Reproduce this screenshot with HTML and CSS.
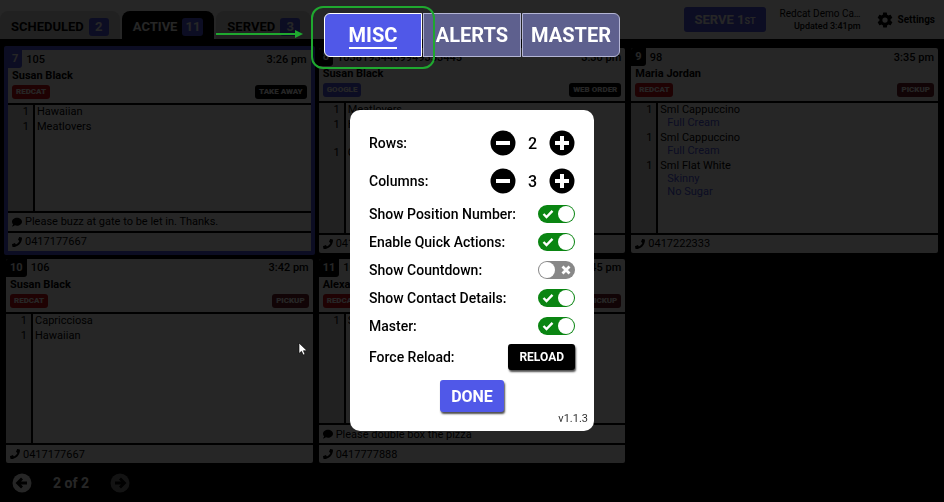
FILE: index.html
```html
<!DOCTYPE html>
<html lang="en">
<head>
    <meta charset="UTF-8">
    <meta name="viewport" content="width=device-width, initial-scale=1.0">
    <title>Orders</title>
    <link rel="stylesheet" href="styles.css">
</head>
<body>
    <svg class="sprite" aria-hidden="true">
        <symbol id="phone" viewBox="0 0 512 512"><path d="M493 24.600l-104-24c-11.300-2.600-22.900 3.300-27.500 13.900l-48 112c-4.200 9.800-1.400 21.300 6.900 28l60.600 49.600c-36 76.700-98.900 140.500-177.200 177.200l-49.600-60.600c-6.800-8.300-18.200-11.100-28-6.900l-112 48C3.900 366.500-2 378.100.6 389.400l24 104C27.100 504.200 36.700 512 48 512c256.100 0 464-207.500 464-464 0-11.200-7.700-20.900-19-23.400z"/></symbol>
        <symbol id="comment" viewBox="0 0 512 512"><path d="M256 32C114.600 32 0 125.100 0 240c0 49.600 21.400 95 57 130.700C44.500 421.100 2.700 466 2.200 466.500c-2.200 2.300-2.800 5.700-1.500 8.700S4.800 480 8 480c66.300 0 116-31.800 140.600-51.400 32.700 12.300 69 19.400 107.400 19.400 141.400 0 256-93.100 256-208S397.400 32 256 32z"/></symbol>
        <symbol id="check" viewBox="0 0 12 10"><path d="M1.500 5l3 3L10.500 1.800" fill="none" stroke="#fff" stroke-width="2.400"/></symbol>
        <symbol id="cross" viewBox="0 0 10 10"><path d="M1.500 1.500l7 7M8.500 1.500l-7 7" fill="none" stroke="#fff" stroke-width="2.800"/></symbol>
    </svg>

    <div class="page">
        <header class="header">
            <nav class="tabs">
                <a class="tab" href="#scheduled">SCHEDULED <span class="count">2</span></a>
                <a class="tab active" href="#active">ACTIVE <span class="count">11</span></a>
                <a class="tab" href="#served">SERVED <span class="count">3</span></a>
            </nav>
            <div class="header-right">
                <button class="serve">SERVE 1<small>ST</small></button>
                <div class="store">
                    <div class="store-name">Redcat Demo Ca…</div>
                    <div class="updated">Updated 3:41pm</div>
                </div>
                <button class="settings">
                    <svg width="18" height="18" viewBox="0 0 24 24"><path d="M19.400 13c.04-.3.060-.65.060-1s-.02-.7-.07-1l2.100-1.650c.2-.15.250-.42.120-.64l-2-3.460c-.12-.22-.37-.3-.6-.22l-2.500 1c-.5-.4-1.070-.73-1.700-.98l-.37-2.650A.5.5 0 0 0 14 2h-4c-.25 0-.45.180-.5.420l-.36 2.650c-.63.250-1.200.6-1.700.98l-2.500-1c-.22-.08-.47 0-.6.220l-2 3.460c-.12.220-.07.490.120.640L4.600 11c-.05.300-.08.660-.08 1s.03.700.080 1l-2.120 1.650c-.2.150-.24.420-.12.640l2 3.460c.12.220.370.300.600.220l2.500-1c.5.400 1.070.730 1.700.980l.36 2.650c.05.240.250.420.500.420h4c.25 0 .46-.18.500-.42l.37-2.650c.63-.25 1.200-.58 1.700-.98l2.500 1c.22.080.470 0 .600-.22l2-3.460c.12-.22.070-.49-.12-.64zM12 15.500a3.500 3.500 0 1 1 0-7 3.500 3.500 0 0 1 0 7z"/></svg>
                    Settings
                </button>
            </div>
        </header>

        <main class="board">
            <article class="card selected">
                <div class="card-top">
                    <div class="line"><span class="pos">7</span><span class="number">105</span><span class="time">3:26 pm</span></div>
                    <div class="name">Susan Black</div>
                    <div class="tags"><span class="tag red">REDCAT</span><span class="tag">TAKE AWAY</span></div>
                </div>
                <ul class="items">
                    <li><span class="qty">1</span><span>Hawaiian</span></li>
                    <li><span class="qty">1</span><span>Meatlovers</span></li>
                </ul>
                <div class="info"><svg class="icon"><use href="#comment"/></svg>Please buzz at gate to be let in. Thanks.</div>
                <div class="info"><svg class="icon"><use href="#phone"/></svg>0417177667</div>
            </article>

            <article class="card">
                <div class="card-top">
                    <div class="line"><span class="pos">8</span><span class="number">10381934469949353445</span><span class="time">3:30 pm</span></div>
                    <div class="name">Susan Black</div>
                    <div class="tags"><span class="tag blue">GOOGLE</span><span class="tag">WEB ORDER</span></div>
                </div>
                <ul class="items">
                    <li><span class="qty">1</span><span>Meatlovers</span></li>
                    <li><span class="qty">1</span><span>Hawaiian<span class="mod">Large</span></span></li>
                    <li><span class="qty">1</span><span>Capricciosa</span></li>
                </ul>
                <div class="info"><svg class="icon"><use href="#phone"/></svg>0417177667</div>
            </article>

            <article class="card">
                <div class="card-top">
                    <div class="line"><span class="pos">9</span><span class="number">98</span><span class="time">3:35 pm</span></div>
                    <div class="name">Maria Jordan</div>
                    <div class="tags"><span class="tag red">REDCAT</span><span class="tag maroon">PICKUP</span></div>
                </div>
                <ul class="items">
                    <li><span class="qty">1</span><span>Sml Cappuccino<span class="mod">Full Cream</span></span></li>
                    <li><span class="qty">1</span><span>Sml Cappuccino<span class="mod">Full Cream</span></span></li>
                    <li><span class="qty">1</span><span>Sml Flat White<span class="mod">Skinny</span><span class="mod">No Sugar</span></span></li>
                </ul>
                <div class="info"><svg class="icon"><use href="#phone"/></svg>0417222333</div>
            </article>

            <article class="card">
                <div class="card-top">
                    <div class="line"><span class="pos">10</span><span class="number">106</span><span class="time">3:42 pm</span></div>
                    <div class="name">Susan Black</div>
                    <div class="tags"><span class="tag red">REDCAT</span><span class="tag maroon">PICKUP</span></div>
                </div>
                <ul class="items">
                    <li><span class="qty">1</span><span>Capricciosa</span></li>
                    <li><span class="qty">1</span><span>Hawaiian</span></li>
                </ul>
                <div class="info"><svg class="icon"><use href="#phone"/></svg>0417177667</div>
            </article>

            <article class="card">
                <div class="card-top">
                    <div class="line"><span class="pos">11</span><span class="number">107</span><span class="time">3:45 pm</span></div>
                    <div class="name">Alexa</div>
                    <div class="tags"><span class="tag red">REDCAT</span><span class="tag maroon">PICKUP</span></div>
                </div>
                <ul class="items">
                    <li><span class="qty">1</span><span>Supreme</span></li>
                </ul>
                <div class="info"><svg class="icon"><use href="#comment"/></svg>Please double box the pizza</div>
                <div class="info"><svg class="icon"><use href="#phone"/></svg>0417777888</div>
            </article>
        </main>

        <footer class="pager">
            <button class="page-btn" aria-label="Previous page">
                <svg width="20" height="20" viewBox="0 0 20 20"><circle cx="10" cy="10" r="9.500" fill="#fff"/><path d="M15 10H6M10 5.500L5.500 10l4.500 4.500" fill="none" stroke="#000" stroke-width="2.800"/></svg>
            </button>
            <span>2 of 2</span>
            <button class="page-btn" aria-label="Next page" disabled>
                <svg width="20" height="20" viewBox="0 0 20 20"><circle cx="10" cy="10" r="9.500" fill="#fff"/><path d="M5 10h9M10 5.500l4.500 4.500-4.500 4.500" fill="none" stroke="#000" stroke-width="2.800"/></svg>
            </button>
        </footer>
    </div>

    <div class="overlay">
        <nav class="modal-tabs">
            <button class="modal-tab current"><span>MISC</span></button>
            <button class="modal-tab"><span>ALERTS</span></button>
            <button class="modal-tab"><span>MASTER</span></button>
        </nav>

        <section class="modal" role="dialog" aria-label="Settings">
            <div class="row tall">
                <span>Rows:</span>
                <div class="stepper">
                    <button aria-label="Fewer rows"><svg width="26" height="26" viewBox="0 0 26 26"><circle cx="13" cy="13" r="12.500"/><path d="M6 13h14" stroke="#fff" stroke-width="4"/></svg></button>
                    <output>2</output>
                    <button aria-label="More rows"><svg width="26" height="26" viewBox="0 0 26 26"><circle cx="13" cy="13" r="12.500"/><path d="M6 13h14M13 6v14" stroke="#fff" stroke-width="4"/></svg></button>
                </div>
            </div>
            <div class="row tall">
                <span>Columns:</span>
                <div class="stepper">
                    <button aria-label="Fewer columns"><svg width="26" height="26" viewBox="0 0 26 26"><circle cx="13" cy="13" r="12.500"/><path d="M6 13h14" stroke="#fff" stroke-width="4"/></svg></button>
                    <output>3</output>
                    <button aria-label="More columns"><svg width="26" height="26" viewBox="0 0 26 26"><circle cx="13" cy="13" r="12.500"/><path d="M6 13h14M13 6v14" stroke="#fff" stroke-width="4"/></svg></button>
                </div>
            </div>
            <div class="row">
                <label for="position">Show Position Number:</label>
                <span class="switch"><input type="checkbox" id="position" checked><svg class="on"><use href="#check"/></svg><svg class="off"><use href="#cross"/></svg></span>
            </div>
            <div class="row">
                <label for="quick">Enable Quick Actions:</label>
                <span class="switch"><input type="checkbox" id="quick" checked><svg class="on"><use href="#check"/></svg><svg class="off"><use href="#cross"/></svg></span>
            </div>
            <div class="row">
                <label for="countdown">Show Countdown:</label>
                <span class="switch"><input type="checkbox" id="countdown"><svg class="on"><use href="#check"/></svg><svg class="off"><use href="#cross"/></svg></span>
            </div>
            <div class="row">
                <label for="contact">Show Contact Details:</label>
                <span class="switch"><input type="checkbox" id="contact" checked><svg class="on"><use href="#check"/></svg><svg class="off"><use href="#cross"/></svg></span>
            </div>
            <div class="row">
                <label for="master">Master:</label>
                <span class="switch"><input type="checkbox" id="master" checked><svg class="on"><use href="#check"/></svg><svg class="off"><use href="#cross"/></svg></span>
            </div>
            <div class="row reload-row">
                <span>Force Reload:</span>
                <button class="reload">RELOAD</button>
            </div>
            <button class="done">DONE</button>
            <div class="version">v1.1.3</div>
        </section>
    </div>

    <div class="highlight"></div>
    <svg class="arrow" width="88" height="10" viewBox="0 0 88 10"><path d="M0 5h82" stroke="#1fa82f" stroke-width="2"/><path d="M79 1l8 4-8 4z" fill="#1fa82f"/></svg>
    <svg class="cursor" width="10" height="14" viewBox="0 0 10 14"><path d="M1 1v10.500l2.500-2.200L5.200 13l1.800-.8-1.600-3.500H9z" fill="#fff" stroke="#000" stroke-width=".6"/></svg>
</body>
</html>
```

FILE: styles.css
```css
* {
    box-sizing: border-box;
}
body {
    margin: 0;
    font-family: Roboto, sans-serif;
    background-color: #000;
    color: #000;
}
button {
    font-family: inherit;
    border: none;
    padding: 0;
    background: none;
    cursor: pointer;
}
svg {
    display: block;
}
.sprite {
    display: none;
}
.page {
    display: flex;
    flex-direction: column;
    height: 100vh;
}

/* header */
.header {
    display: flex;
    justify-content: space-between;
    height: 39px;
    background-color: #fff;
}
.tabs {
    display: flex;
    align-items: flex-end;
    gap: 2px;
}
.tab {
    display: flex;
    align-items: center;
    gap: 5px;
    height: 28px;
    padding: 3px 11px 0;
    border-radius: 8px 8px 0 0;
    background-color: #ddd;
    color: #000;
    font-size: 13px;
    font-weight: 700;
    text-decoration: none;
}
.tab.active {
    background-color: #000;
    color: #fff;
}
.count {
    min-width: 20px;
    padding: 0 3px;
    border-radius: 3px;
    background-color: #5058e8;
    color: #fff;
    line-height: 18px;
    text-align: center;
}
.header-right {
    display: flex;
    align-items: center;
    padding-right: 9px;
}
.serve {
    height: 25px;
    padding: 0 10px;
    margin-right: 14px;
    border-radius: 3px;
    background-color: #5058e8;
    color: #fff;
    font-size: 13px;
    font-weight: 700;
}
.serve small {
    font-size: 9px;
}
.store {
    margin-right: 15px;
    text-align: right;
    line-height: 13px;
}
.store-name {
    font-size: 10px;
}
.updated {
    font-size: 9px;
    font-weight: 500;
}
.settings {
    display: flex;
    align-items: center;
    gap: 4px;
    font-size: 10px;
    font-weight: 700;
}

/* order cards */
.board {
    flex: 1;
    display: grid;
    grid-template-columns: repeat(3, 1fr);
    grid-template-rows: 1fr 1fr;
    gap: 6px;
    padding: 9px 6px 0;
}
.card {
    display: flex;
    flex-direction: column;
    border-radius: 2px;
    background-color: #fff;
    overflow: hidden;
}
.card.selected {
    margin: -2px;
    border: 4px solid #5058e8;
}
.line {
    display: flex;
    align-items: center;
    height: 18px;
    padding-right: 4px;
    font-size: 11px;
    font-weight: 500;
}
.pos {
    padding: 0 4px;
    border-radius: 0 0 3px 0;
    background-color: #000;
    color: #fff;
    line-height: 18px;
    font-weight: 700;
}
.selected .pos {
    background-color: #5058e8;
}
.number {
    flex: 1;
    padding-left: 4px;
}
.name {
    padding-left: 4px;
    font-size: 11px;
    font-weight: 700;
    line-height: 16px;
}
.tags {
    display: flex;
    justify-content: space-between;
    padding: 1px 4px 4px;
}
.tag {
    padding: 0 4px;
    border-radius: 3px;
    background-color: #000;
    color: #fff;
    font-size: 8px;
    font-weight: 900;
    line-height: 14px;
}
.tag.red {
    background-color: #d01018;
}
.tag.blue {
    background-color: #5058e8;
}
.tag.maroon {
    background-color: #702028;
}
.items {
    flex: 1;
    margin: 0;
    padding: 0;
    list-style: none;
    border-top: 2px solid #000;
    background: linear-gradient(to right, #ddd 25px, #000 25px, #000 27px, #fff 27px);
    font-size: 11px;
    line-height: 13px;
}
.items li {
    display: grid;
    grid-template-columns: 21px 1fr;
    gap: 8px;
    margin-bottom: 2px;
}
.qty {
    text-align: right;
}
.mod {
    display: block;
    padding-left: 7px;
    color: #5058e8;
}
.info {
    display: flex;
    align-items: center;
    gap: 3px;
    height: 20px;
    padding: 0 4px;
    border-top: 2px solid #000;
    font-size: 11px;
}
.icon {
    width: 10px;
    height: 10px;
}
.pager {
    display: flex;
    align-items: center;
    gap: 21px;
    height: 39px;
    padding-left: 12px;
    color: #fff;
    font-size: 14px;
    font-weight: 700;
}
.page-btn:disabled {
    opacity: 0.5;
}

/* settings overlay */
.overlay {
    position: fixed;
    inset: 0;
    display: flex;
    flex-direction: column;
    align-items: center;
    gap: 53px;
    padding-top: 13px;
    background-color: rgba(0, 0, 0, 0.85);
}
.modal-tabs {
    display: flex;
    gap: 1px;
}
.modal-tab {
    width: 98px;
    height: 44px;
    border: 1px solid #b4b5d4;
    background-color: #5e608e;
    color: #fff;
    font-size: 20px;
    font-weight: 700;
}
.modal-tab:first-child {
    border-radius: 6px 0 0 6px;
}
.modal-tab:last-child {
    border-radius: 0 6px 6px 0;
}
.modal-tab.current {
    border-color: #fff;
    background-color: #5058e8;
}
.modal-tab.current span {
    border-bottom: 2px solid #fff;
}
.modal {
    display: flex;
    flex-direction: column;
    width: 244px;
    padding: 14px 19px 6px;
    border-radius: 10px;
    background-color: #fff;
}
.row {
    display: flex;
    justify-content: space-between;
    align-items: center;
    height: 28px;
    font-size: 14px;
    font-weight: 500;
}
.row.tall {
    height: 38px;
}
.row.reload-row {
    height: 34px;
}
.stepper {
    display: flex;
    align-items: center;
    gap: 12px;
}
.stepper output {
    font-size: 16px;
}
.switch {
    display: grid;
    grid-template-columns: 19px 18px;
    align-items: center;
}
.switch input {
    grid-area: 1 / 1 / 2 / 3;
    display: flex;
    appearance: none;
    width: 37px;
    height: 18px;
    margin: 0;
    padding: 1px;
    border-radius: 9px;
    background-color: #888;
}
.switch input::before {
    content: "";
    width: 16px;
    height: 16px;
    border-radius: 50%;
    background-color: #fff;
}
.switch input:checked {
    justify-content: flex-end;
    background-color: #0a8512;
}
.switch svg {
    grid-row: 1;
    justify-self: center;
    width: 12px;
    height: 10px;
    pointer-events: none;
}
.switch .on {
    grid-column: 1;
}
.switch .off {
    grid-column: 2;
}
.switch input:not(:checked) ~ .on,
.switch input:checked ~ .off {
    display: none;
}
.reload,
.done {
    border-radius: 3px;
    color: #fff;
    font-weight: 700;
    box-shadow: 1px 2px 2px rgba(0, 0, 0, 0.7);
}
.reload {
    height: 26px;
    padding: 0 11px;
    background-color: #000;
    font-size: 12px;
}
.done {
    align-self: center;
    height: 32px;
    margin-top: 6px;
    padding: 0 11px;
    background-color: #5058e8;
    font-size: 16px;
}
.version {
    margin-right: -13px;
    color: #333;
    font-size: 11px;
    line-height: 13px;
    text-align: right;
}

/* callout drawn over the page */
.highlight {
    position: fixed;
    top: 6px;
    left: 311px;
    width: 124px;
    height: 63px;
    border: 2px solid #1fa82f;
    border-radius: 12px;
    pointer-events: none;
}
.arrow {
    position: fixed;
    top: 29px;
    left: 216px;
}
.cursor {
    position: fixed;
    top: 342px;
    left: 298px;
}
```
